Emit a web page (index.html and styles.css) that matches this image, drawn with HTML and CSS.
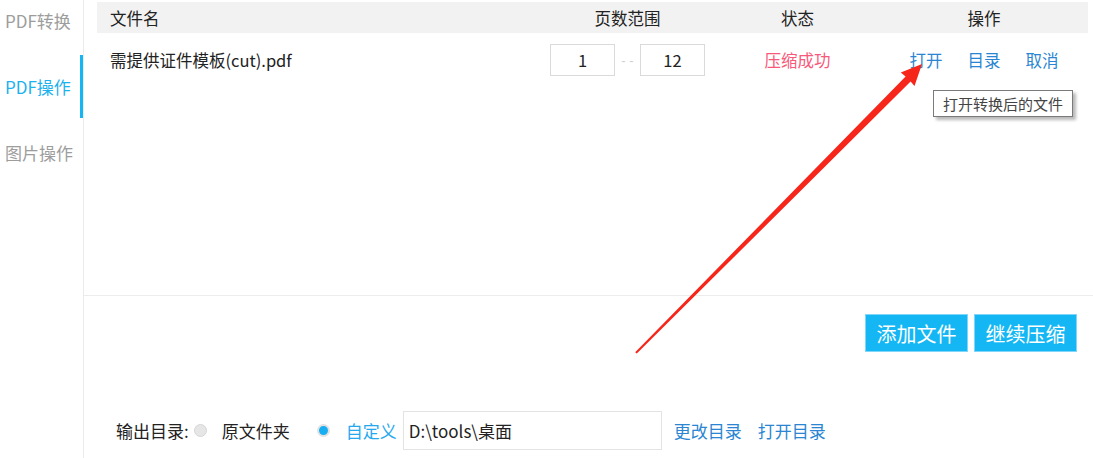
FILE: index.html
```html
<!DOCTYPE html>
<html lang="zh-CN">
<head>
<meta charset="utf-8">
<title>PDF操作</title>
<link rel="stylesheet" href="styles.css">
</head>
<body>
<div class="app">
  <nav class="sidebar">
    <div class="nav-item">PDF转换</div>
    <div class="nav-item active">PDF操作</div>
    <div class="nav-item">图片操作</div>
  </nav>
  <main class="main">
    <section class="list">
      <div class="grid head">
        <div class="c-name">文件名</div>
        <div class="c-center">页数范围</div>
        <div class="c-center">状态</div>
        <div class="c-center">操作</div>
      </div>
      <div class="grid row">
        <div class="c-name">需提供证件模板(cut).pdf</div>
        <div class="c-center pages">
          <span class="page-box">1</span>
          <span class="dash">- -</span>
          <span class="page-box">12</span>
        </div>
        <div class="c-center status">压缩成功</div>
        <div class="c-center ops">
          <a class="link">打开</a>
          <a class="link">目录</a>
          <a class="link">取消</a>
        </div>
      </div>
      <div class="tooltip">打开转换后的文件</div>
    </section>
    <section class="actions">
      <button class="btn">添加文件</button>
      <button class="btn">继续压缩</button>
    </section>
    <section class="output">
      <span class="label">输出目录:</span>
      <span class="radio"></span>
      <span class="opt">原文件夹</span>
      <span class="radio on"></span>
      <span class="opt custom">自定义</span>
      <span class="path">D:\tools\桌面</span>
      <a class="link change">更改目录</a>
      <a class="link open">打开目录</a>
    </section>
  </main>
  <svg class="arrow" width="1093" height="458" viewBox="0 0 1093 458">
    <polygon fill="#f7261b" points="922,64 914.5,86 910.6,81.6 636.8,353.6 635.2,352.2 905.6,76.6 900.8,72.6"/>
  </svg>
</div>
</body>
</html>
```

FILE: styles.css
```css
* { box-sizing: border-box; }
html, body { margin: 0; padding: 0; background: #fff; }
body {
  font-family: "Noto Sans CJK SC", "Noto Sans", sans-serif;
  font-size: 16.5px;
  color: #333;
}
.app {
  position: relative;
  display: flex;
  width: 1093px;
  height: 458px;
  overflow: hidden;
}
.sidebar {
  width: 84px;
  flex: none;
  border-right: 1px solid #ebebeb;
  display: flex;
  flex-direction: column;
  gap: 24px;
}
.nav-item {
  position: relative;
  height: 42px;
  line-height: 42px;
  padding-left: 5px;
  color: #9d9d9d;
  font-size: 17px;
  white-space: nowrap;
}
.nav-item.active { color: #1cb2ee; }
.nav-item.active::after {
  content: "";
  position: absolute;
  right: 0;
  top: -11px;
  bottom: -10px;
  width: 3px;
  background: #15b4f2;
}
.main {
  flex: 1;
  display: flex;
  flex-direction: column;
}
.list {
  position: relative;
  height: 296px;
  padding: 2px 5px 0 13px;
  border-bottom: 1px solid #ececec;
}
.grid {
  display: grid;
  grid-template-columns: 443px 175px 165px 1fr;
  align-items: center;
}
.head {
  height: 31px;
  background: #f2f2f2;
  color: #222;
}
.c-name { padding-left: 13px; white-space: nowrap; }
.c-center { text-align: center; white-space: nowrap; }
.row {
  padding-top: 11px;
  height: 43px;
  color: #222;
}
.pages {
  display: flex;
  justify-content: center;
  align-items: center;
}
.page-box {
  width: 65px;
  height: 32px;
  line-height: 30px;
  border: 1px solid #dadada;
  text-align: center;
  color: #222;
}
.dash {
  width: 25px;
  text-align: center;
  color: #cfcfcf;
  font-size: 13px;
  font-family: "Liberation Sans", sans-serif;
}
.status { color: #f8587a; }
.ops {
  display: flex;
  justify-content: center;
  gap: 25px;
}
.link { color: #2a86d2; cursor: pointer; white-space: nowrap; }
.tooltip {
  position: absolute;
  left: 849px;
  top: 90px;
  width: 140px;
  height: 27px;
  line-height: 25px;
  border: 1px solid #7a7a7a;
  background: #fff;
  box-shadow: 3px 3px 3px rgba(0,0,0,0.28);
  font-size: 15px;
  color: #444;
  text-align: center;
  white-space: nowrap;
}
.actions {
  display: flex;
  justify-content: flex-end;
  gap: 6px;
  padding: 18px 16px 0 0;
}
.btn {
  width: 103px;
  height: 38px;
  border: 1px solid #7fd6f8;
  background: #14b7f4;
  color: #fff;
  font-family: inherit;
  font-size: 20px;
  padding: 0;
}
.output {
  display: flex;
  align-items: center;
  margin-top: 59px;
  height: 39px;
  padding-left: 32px;
  color: #222;
  font-size: 17px;
  white-space: nowrap;
}
.label { margin-right: 5px; }
.radio {
  width: 13px;
  height: 13px;
  border-radius: 50%;
  background: #e6e6e6;
  border: 1px solid #d6d6d6;
  margin-right: 15px;
  flex: none;
}
.radio.on {
  background: #17aef2;
  border: 2px solid #e2e2e2;
  margin-left: 27px;
  margin-right: 16px;
}
.custom { color: #26a8ee; margin-right: 6px; }
.path {
  width: 259px;
  height: 39px;
  line-height: 37px;
  border: 1px solid #e3e3e3;
  padding-left: 5px;
  color: #222;
}
.change { margin-left: 12px; }
.open { margin-left: 16px; }
.arrow {
  position: absolute;
  left: 0;
  top: 0;
  pointer-events: none;
}
```
